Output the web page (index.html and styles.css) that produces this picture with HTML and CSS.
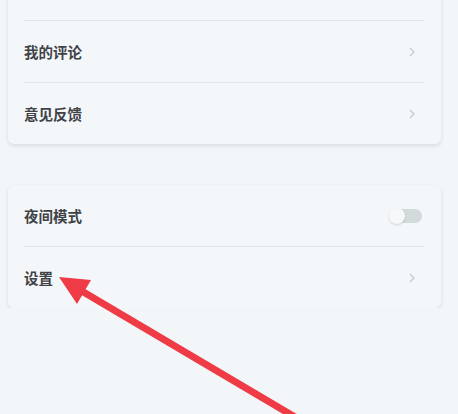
FILE: index.html
```html
<!DOCTYPE html>
<html lang="zh-CN">
<head>
    <meta charset="UTF-8">
    <meta name="viewport" content="width=device-width, initial-scale=1.0">
    <title>我的</title>
    <link rel="stylesheet" href="styles.css">
</head>
<body>
    <div class="page">
        <div class="card card-top">
            <div class="row"></div>
            <div class="row">
                <span class="label">我的评论</span>
                <svg class="chevron" width="6" height="10" viewBox="0 0 6 10"><path d="M1 1 L5 5 L1 9" fill="none" stroke="#c5c8cc" stroke-width="1.2"/></svg>
            </div>
            <div class="row">
                <span class="label">意见反馈</span>
                <svg class="chevron" width="6" height="10" viewBox="0 0 6 10"><path d="M1 1 L5 5 L1 9" fill="none" stroke="#c5c8cc" stroke-width="1.2"/></svg>
            </div>
        </div>

        <div class="card">
            <div class="row">
                <span class="label">夜间模式</span>
                <span class="switch"><span class="knob"></span></span>
            </div>
            <div class="row">
                <span class="label">设置</span>
                <svg class="chevron" width="6" height="10" viewBox="0 0 6 10"><path d="M1 1 L5 5 L1 9" fill="none" stroke="#c5c8cc" stroke-width="1.2"/></svg>
            </div>
        </div>
    </div>

    <svg class="arrow" width="458" height="414" viewBox="0 0 458 414">
        <line x1="80" y1="290" x2="300" y2="420" stroke="#ee3b45" stroke-width="7"/>
        <polygon points="59,277 91,280 77,304" fill="#ee3b45"/>
    </svg>
</body>
</html>
```

FILE: styles.css
```css
body {
    margin: 0;
    background: #f3f6f9;
    font-family: "Noto Sans CJK SC", "Noto Sans", sans-serif;
    overflow: hidden;
}

.page {
    padding: 0 17px 0 8px;
    display: flex;
    flex-direction: column;
    gap: 41px;
}

.card {
    background: #f4f7fa;
    border-radius: 6px;
    box-shadow: 0 2px 4px rgba(0, 0, 0, 0.1);
    padding: 0 16px;
}

.card-top {
    margin-top: -41px;
}

.row {
    height: 61px;
    display: flex;
    align-items: center;
    justify-content: space-between;
    border-top: 1px solid #e4e7ea;
}

.row:first-child {
    border-top: none;
}

.label {
    font-size: 14.5px;
    font-weight: bold;
    color: #404246;
}

.chevron {
    margin-right: 10px;
}

.switch {
    width: 32px;
    height: 14px;
    border-radius: 7px;
    background: #d3dadc;
    position: relative;
    margin-right: 3px;
}

.knob {
    position: absolute;
    left: -1px;
    top: -1px;
    width: 16px;
    height: 16px;
    border-radius: 50%;
    background: #f6f8fa;
    box-shadow: 0 1px 2px rgba(0, 0, 0, 0.15);
}

.arrow {
    position: absolute;
    left: 0;
    top: 0;
}
```
